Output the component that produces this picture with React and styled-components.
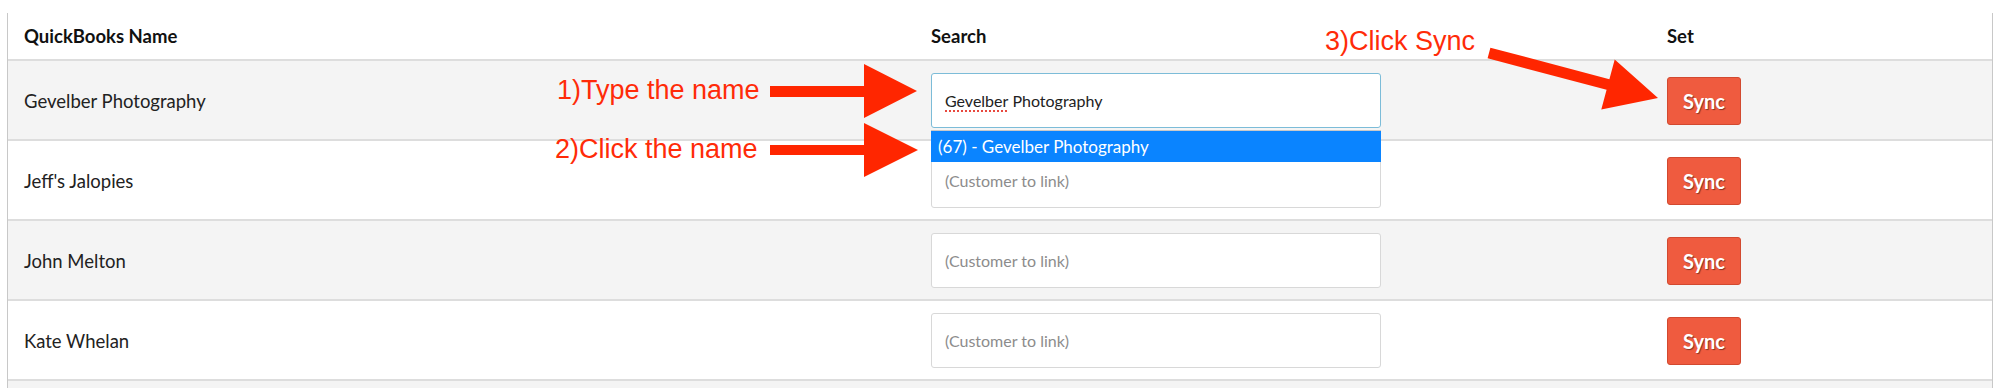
import styled, { createGlobalStyle } from "styled-components";

const GlobalStyle = createGlobalStyle`
  html, body {
    margin: 0;
    padding: 0;
    background: #ffffff;
  }
  body {
    font-family: "Lato", "Liberation Sans", sans-serif;
    color: #222222;
  }
`;

const customers = [
  { name: "Gevelber Photography", typed: true },
  { name: "Jeff's Jalopies" },
  { name: "John Melton" },
  { name: "Kate Whelan" },
];

const App = () => {
  return (
    <Page>
      <GlobalStyle />
      <Panel>
        <HeaderRow>
          <HeadCell>QuickBooks Name</HeadCell>
          <HeadCell>Search</HeadCell>
          <HeadCell>Set</HeadCell>
        </HeaderRow>
        {customers.map((c, i) => (
          <Row key={c.name} $striped={i % 2 === 0}>
            <NameCell>{c.name}</NameCell>
            <SearchCell>
              <InputWrap>
                {c.typed ? (
                  <SearchBox $focused>
                    <Misspelled>Gevelber</Misspelled>&nbsp;Photography
                  </SearchBox>
                ) : (
                  <SearchInput placeholder="(Customer to link)" readOnly />
                )}
                {c.typed && <Dropdown>(67) - Gevelber Photography</Dropdown>}
              </InputWrap>
            </SearchCell>
            <SetCell>
              <SyncButton>Sync</SyncButton>
            </SetCell>
          </Row>
        ))}
        <Row $striped />
      </Panel>

      <Annotations>
        <svg width="1999" height="388" viewBox="0 0 1999 388">
          <polygon
            fill="#ff2600"
            points="770,86 864,86 864,64 917,91 864,118 864,97 770,97"
          />
          <polygon
            fill="#ff2600"
            points="770,145 864,145 864,123 918,150 864,177 864,155 770,155"
          />
          <polygon
            fill="#ff2600"
            points="1490.4,47.7 1609.4,79.2 1614.7,59.4 1658,98 1601.3,109.6 1606.6,89.8 1487.6,58.3"
          />
        </svg>
        <Label $x={557} $y={77}>1)Type the name</Label>
        <Label $x={555} $y={136}>2)Click the name</Label>
        <Label $x={1325} $y={28}>3)Click Sync</Label>
      </Annotations>
    </Page>
  );
};

const Page = styled.div`
  position: relative;
  width: 1999px;
  height: 388px;
  overflow: hidden;
  box-sizing: border-box;
  padding: 13px 6px 0 7px;
  background: #ffffff;
`;

const Panel = styled.div`
  height: 100%;
  border-left: 1px solid #c8c8c8;
  border-right: 1px solid #c8c8c8;
  background: #ffffff;
`;

const columns = `
  display: grid;
  grid-template-columns: 907px 736px 1fr;
`;

const HeaderRow = styled.div`
  ${columns}
  height: 46px;
`;

const HeadCell = styled.div`
  padding: 12px 0 0 16px;
  font-weight: 700;
  font-size: 18.5px;
  line-height: 22px;
  color: #111111;
`;

const Row = styled.div`
  ${columns}
  align-items: center;
  height: 78px;
  border-top: 2px solid #dddddd;
  background: ${(p) => (p.$striped ? "#f4f4f4" : "#ffffff")};
`;

const NameCell = styled.div`
  padding: 2px 0 0 16px;
  font-size: 18.5px;
  line-height: 22px;
  color: #222222;
`;

const SearchCell = styled.div`
  padding-left: 16px;
`;

const InputWrap = styled.div`
  position: relative;
  width: 450px;
`;

const boxStyle = `
  display: flex;
  align-items: center;
  width: 450px;
  height: 55px;
  box-sizing: border-box;
  padding: 0 13px;
  border: 1px solid #d8d8d8;
  border-radius: 3px;
  background: #ffffff;
  font-family: "Lato", "Liberation Sans", sans-serif;
  font-size: 16px;
  color: #222222;
`;

const SearchInput = styled.input`
  ${boxStyle}
  outline: none;

  &::placeholder {
    color: #8c8c8c;
  }
`;

const SearchBox = styled.div`
  ${boxStyle}
  border-color: ${(p) => (p.$focused ? "#7cbcd8" : "#d8d8d8")};
`;

const Misspelled = styled.span`
  text-decoration: underline dotted #e8493f;
  text-decoration-thickness: 2px;
  text-underline-offset: 4px;
`;

const Dropdown = styled.div`
  position: absolute;
  left: 0;
  right: 0;
  top: calc(100% + 3px);
  height: 31px;
  box-sizing: border-box;
  padding-left: 7px;
  background: #0a84ff;
  box-shadow: 0 -1px 0 #c9c9c9;
  color: #ffffff;
  font-size: 17px;
  line-height: 31px;
  z-index: 2;
`;

const SetCell = styled.div`
  padding-left: 16px;
`;

const SyncButton = styled.button`
  width: 74px;
  height: 48px;
  margin-top: 1px;
  border: 1px solid #d2492f;
  border-radius: 3px;
  background: #ef5b3f;
  color: #ffffff;
  font-family: "Lato", "Liberation Sans", sans-serif;
  font-weight: 700;
  font-size: 20px;
  text-shadow: 1px 1px 1px rgba(0, 0, 0, 0.45);
  cursor: pointer;
`;

const Annotations = styled.div`
  position: absolute;
  inset: 0;
  pointer-events: none;
  z-index: 5;

  svg {
    position: absolute;
    left: 0;
    top: 0;
  }
`;

const Label = styled.span`
  position: absolute;
  left: ${(p) => p.$x}px;
  top: ${(p) => p.$y}px;
  font-family: "Liberation Sans", Arial, sans-serif;
  font-size: 27px;
  line-height: 27px;
  color: #ff2b08;
  white-space: nowrap;
`;

export default App;
